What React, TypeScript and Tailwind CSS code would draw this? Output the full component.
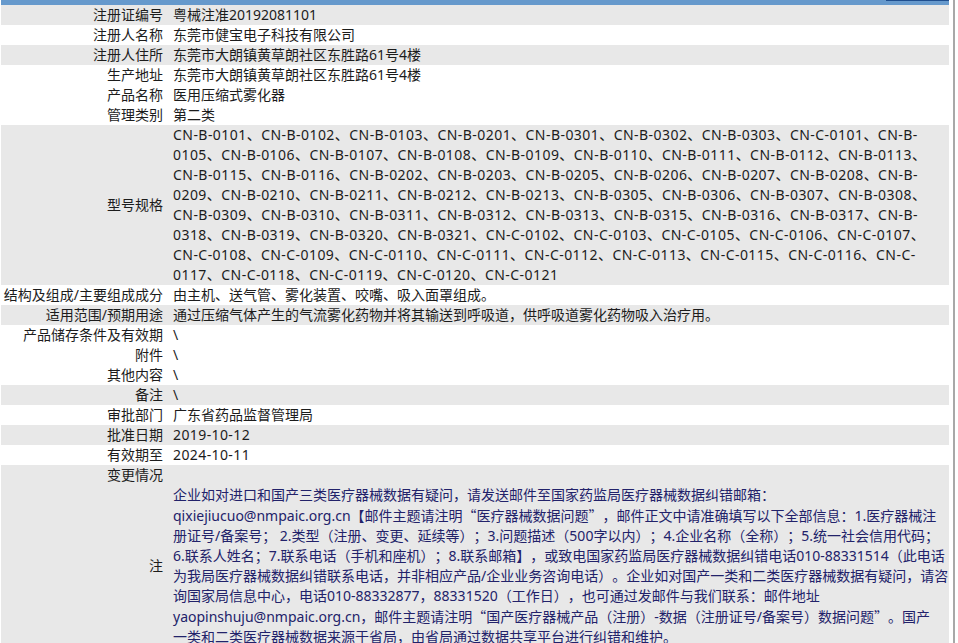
import React from "react";

const models = [
  "CN-B-0101、CN-B-0102、CN-B-0103、CN-B-0201、CN-B-0301、CN-B-0302、CN-B-0303、CN-C-0101、CN-B-",
  "0105、CN-B-0106、CN-B-0107、CN-B-0108、CN-B-0109、CN-B-0110、CN-B-0111、CN-B-0112、CN-B-0113、",
  "CN-B-0115、CN-B-0116、CN-B-0202、CN-B-0203、CN-B-0205、CN-B-0206、CN-B-0207、CN-B-0208、CN-B-",
  "0209、CN-B-0210、CN-B-0211、CN-B-0212、CN-B-0213、CN-B-0305、CN-B-0306、CN-B-0307、CN-B-0308、",
  "CN-B-0309、CN-B-0310、CN-B-0311、CN-B-0312、CN-B-0313、CN-B-0315、CN-B-0316、CN-B-0317、CN-B-",
  "0318、CN-B-0319、CN-B-0320、CN-B-0321、CN-C-0102、CN-C-0103、CN-C-0105、CN-C-0106、CN-C-0107、",
  "CN-C-0108、CN-C-0109、CN-C-0110、CN-C-0111、CN-C-0112、CN-C-0113、CN-C-0115、CN-C-0116、CN-C-",
  "0117、CN-C-0118、CN-C-0119、CN-C-0120、CN-C-0121",
];

const notes = [
  "企业如对进口和国产三类医疗器械数据有疑问，请发送邮件至国家药监局医疗器械数据纠错邮箱：",
  "qixiejiucuo@nmpaic.org.cn【邮件主题请注明“医疗器械数据问题”，邮件正文中请准确填写以下全部信息：1.医疗器械注",
  "册证号/备案号； 2.类型（注册、变更、延续等）；3.问题描述（500字以内）；4.企业名称（全称）；5.统一社会信用代码；",
  "6.联系人姓名；7.联系电话（手机和座机）；8.联系邮箱】，或致电国家药监局医疗器械数据纠错电话010-88331514（此电话",
  "为我局医疗器械数据纠错联系电话，并非相应产品/企业业务咨询电话）。企业如对国产一类和二类医疗器械数据有疑问，请咨",
  "询国家局信息中心，电话010-88332877，88331520（工作日），也可通过发邮件与我们联系：邮件地址",
  "yaopinshuju@nmpaic.org.cn，邮件主题请注明“国产医疗器械产品（注册）-数据（注册证号/备案号）数据问题”。国产",
  "一类和二类医疗器械数据来源于省局，由省局通过数据共享平台进行纠错和维护。",
];

function Row({
  label,
  gray,
  children,
}: {
  label: string;
  gray?: boolean;
  children?: React.ReactNode;
}) {
  return (
    <div className={gray ? "flex bg-[#e8e8e8]" : "flex bg-white"}>
      <div className="w-[165px] shrink-0 flex items-center justify-end pr-[3px] whitespace-nowrap">
        {label}
      </div>
      <div className="pl-[7px] min-h-[20px]">{children}</div>
    </div>
  );
}

// full-width quotes come from the CJK face, like on the original page
function NoteLine({ text }: { text: string }) {
  const parts = text.split(/([“”])/);
  return (
    <div className="whitespace-nowrap">
      {parts.map((p, i) =>
        p === "“" || p === "”" ? (
          <span key={i} className="font-['Noto_Sans_CJK_SC',sans-serif]">
            {p}
          </span>
        ) : (
          <React.Fragment key={i}>{p}</React.Fragment>
        )
      )}
    </div>
  );
}

export default function App() {
  return (
    <div className="flex h-[643px] overflow-hidden bg-white text-[14px] leading-[20px] text-[#1c1c1c] [text-spacing-trim:space-all] font-['Noto_Sans','Noto_Sans_CJK_SC',sans-serif]">
      <div className="ml-px w-[948px] shrink-0">
        <div className="h-[5px] bg-[#6699cc] flex justify-end">
          <div className="h-px w-[63px] bg-[#1f4f8f]" />
        </div>
        <Row label="注册证编号" gray>粤械注准20192081101</Row>
        <Row label="注册人名称">东莞市健宝电子科技有限公司</Row>
        <Row label="注册人住所" gray>东莞市大朗镇黄草朗社区东胜路61号4楼</Row>
        <Row label="生产地址">东莞市大朗镇黄草朗社区东胜路61号4楼</Row>
        <Row label="产品名称">医用压缩式雾化器</Row>
        <Row label="管理类别">第二类</Row>
        <Row label="型号规格" gray>
          <div className="tracking-[0.45px]">
            {models.map((l, i) => (
              <div key={i} className="whitespace-nowrap">
                {l}
              </div>
            ))}
          </div>
        </Row>
        <Row label="结构及组成/主要组成成分">由主机、送气管、雾化装置、咬嘴、吸入面罩组成。</Row>
        <Row label="适用范围/预期用途" gray>
          通过压缩气体产生的气流雾化药物并将其输送到呼吸道，供呼吸道雾化药物吸入治疗用。
        </Row>
        <Row label="产品储存条件及有效期">\</Row>
        <Row label="附件">\</Row>
        <Row label="其他内容">\</Row>
        <Row label="备注" gray>\</Row>
        <Row label="审批部门">广东省药品监督管理局</Row>
        <Row label="批准日期" gray>
          <span className="tracking-[0.4px]">2019-10-12</span>
        </Row>
        <Row label="有效期至">
          <span className="tracking-[0.4px]">2024-10-11</span>
        </Row>
        <Row label="变更情况" gray />
        <Row label="注" gray>
          <div className="text-[#22226a]">
            {notes.map((l, i) => (
              <NoteLine key={i} text={l} />
            ))}
          </div>
        </Row>
      </div>
      <div className="ml-[4px] w-[2px] shrink-0 bg-[#a8a8a8]" />
    </div>
  );
}
